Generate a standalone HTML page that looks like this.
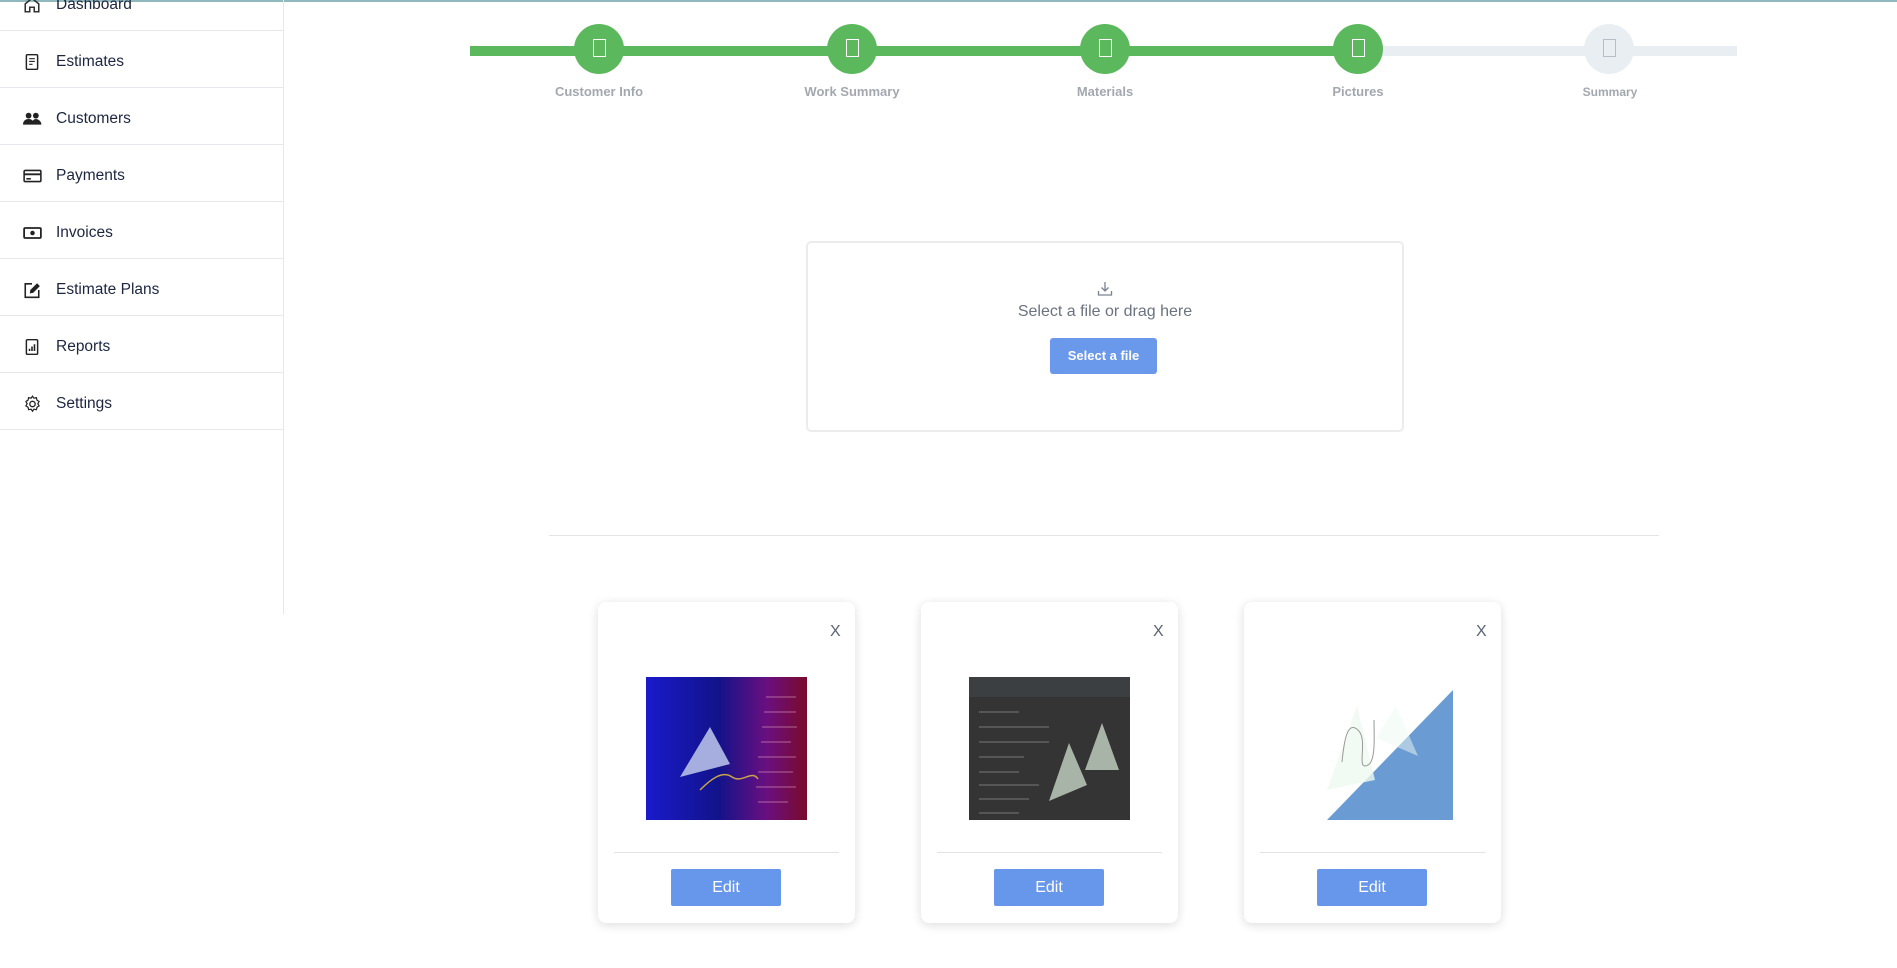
<!DOCTYPE html>
<html><head><meta charset="utf-8"><style>
*{box-sizing:border-box;margin:0;padding:0}
body{width:1897px;height:968px;background:#fff;font-family:"Liberation Sans",sans-serif;position:relative;overflow:hidden}
.topline{position:absolute;left:0;top:0;width:1897px;height:2px;background:#8fb9bc}
.side{position:absolute;left:0;top:0;width:284px;height:614px;border-right:1px solid #e6e8ee}
.row{position:absolute;left:0;width:283px;height:57px;border-bottom:1px solid #e6e8ee}
.row span{position:absolute;left:56px;top:calc(50% + 3px);transform:translateY(-50%);font-size:15.5px;color:#1d2640}
.row svg{position:absolute;left:23px;top:calc(50% + 3px);transform:translateY(-50%)}
.line{position:absolute;top:46px;height:10px}
.circ{position:absolute;top:24px;width:50px;height:50px;border-radius:50%}
.circ i{position:absolute;left:19px;top:15px;width:13px;height:18px;border:1px solid #fff}
.lbl{position:absolute;top:84px;font-size:13px;font-weight:bold;color:#a3a8b0;transform:translateX(-50%);white-space:nowrap}
.up{position:absolute;left:806px;top:241px;width:598px;height:191px;border:2.5px solid #ececec;border-radius:5px}
.up p{position:absolute;top:60px;width:100%;text-align:center;font-size:16px;color:#6b7280}
.btn{position:absolute;left:242px;top:95px;width:107px;height:36px;background:#6a98ea;border-radius:3px;color:#fff;font-weight:bold;font-size:13px;text-align:center;line-height:36px}
.hr{position:absolute;left:549px;top:535px;width:1110px;height:1px;background:#e3e3e3}
.card{position:absolute;top:602px;width:257px;height:321px;border-radius:8px;background:#fff;box-shadow:0 2px 10px rgba(0,0,0,.14)}
.card .x{position:absolute;left:232px;top:21px;font-size:16px;color:#5a6274}
.card .img{position:absolute;left:48px;top:75px;width:161px;height:143px}
.card .div{position:absolute;left:16px;right:16px;top:250px;height:1px;background:#e2e2e2}
.card .edit{position:absolute;left:73px;top:267px;width:110px;height:37px;background:#6797ea;border-radius:2px;color:#fff;font-size:16px;text-align:center;line-height:37px}
</style></head><body>
<div class="topline"></div>
<div class="side">
<div class="row" style="top:-26px"><svg width="18" height="18" viewBox="0 0 16 16"><path d="M2 14V7l6-5 6 5v7h-4v-4H6v4z" fill="none" stroke="#333" stroke-width="1.4"/></svg><span>Dashboard</span></div>
<div class="row" style="top:31px"><svg width="18" height="18" viewBox="0 0 16 16"><rect x="3" y="1.5" width="10" height="13" rx="1" fill="none" stroke="#222" stroke-width="1.3"/><path d="M5.5 5h5M5.5 7.5h5M5.5 10h3" stroke="#222"/></svg><span>Estimates</span></div>
<div class="row" style="top:88px"><svg width="19" height="18" viewBox="0 0 17 16"><circle cx="5" cy="5" r="2.6" fill="#222"/><circle cx="11.5" cy="5" r="2.6" fill="#222"/><path d="M0 13c0-3 2-5 5-5s5 2 5 5zM8 13c0-3 1.5-5 3.5-5s5 2 5 5z" fill="#222"/></svg><span>Customers</span></div>
<div class="row" style="top:145px"><svg width="19" height="18" viewBox="0 0 17 16"><rect x="1" y="3" width="15" height="10" rx="1" fill="none" stroke="#222" stroke-width="1.4"/><path d="M1 6.5h15" stroke="#222" stroke-width="1.6"/><path d="M3 10.5h4" stroke="#222" stroke-width="1.4"/></svg><span>Payments</span></div>
<div class="row" style="top:202px"><svg width="19" height="18" viewBox="0 0 17 16"><rect x="1" y="3.5" width="15" height="9" rx="1" fill="none" stroke="#222" stroke-width="1.6"/><circle cx="8.5" cy="8" r="2" fill="#222"/></svg><span>Invoices</span></div>
<div class="row" style="top:259px"><svg width="18" height="18" viewBox="0 0 16 16"><path d="M8 2.5H2v12h12V8" fill="none" stroke="#222" stroke-width="1.4"/><path d="M6 11l.5-3 6-6 2.5 2.5-6 6z" fill="#222"/></svg><span>Estimate Plans</span></div>
<div class="row" style="top:316px"><svg width="18" height="18" viewBox="0 0 16 16"><rect x="3" y="1.5" width="10" height="13" rx="1" fill="none" stroke="#222" stroke-width="1.3"/><path d="M5.8 11.5v-2M8 11.5v-4M10.2 11.5v-6" stroke="#222" stroke-width="1.4"/></svg><span>Reports</span></div>
<div class="row" style="top:373px"><svg width="19" height="19" viewBox="0 0 17 17"><path d="M8.5 1.5l1.3 1.8 2.2-.5.5 2.2 1.9 1.2-1.1 2 1.1 2-1.9 1.2-.5 2.2-2.2-.5-1.3 1.8-1.3-1.8-2.2.5-.5-2.2-1.9-1.2 1.1-2-1.1-2 1.9-1.2.5-2.2 2.2.5z" fill="none" stroke="#222" stroke-width="1.1"/><circle cx="8.5" cy="8.5" r="2.4" fill="none" stroke="#222" stroke-width="1.2"/></svg><span>Settings</span></div>
</div>

<div class="line" style="left:470px;width:888px;background:#5cb85c"></div>
<div class="line" style="left:1358px;width:379px;background:#e9eef3"></div>
<div class="circ" style="left:574px;background:#5cb85c"><i></i></div>
<div class="circ" style="left:827px;background:#5cb85c"><i></i></div>
<div class="circ" style="left:1080px;background:#5cb85c"><i></i></div>
<div class="circ" style="left:1333px;background:#5cb85c"><i></i></div>
<div class="circ" style="left:1584px;background:#e9eef3"><i style="border-color:#b8bcc4"></i></div>
<div class="lbl" style="left:599px">Customer Info</div>
<div class="lbl" style="left:852px">Work Summary</div>
<div class="lbl" style="left:1105px">Materials</div>
<div class="lbl" style="left:1358px">Pictures</div>
<div class="lbl" style="left:1610px;font-size:12px;top:85px">Summary</div>

<div class="up">
<svg style="position:absolute;left:289px;top:38px" width="16" height="16" viewBox="0 0 16 16"><path d="M8 1v9M4.5 6.5L8 10l3.5-3.5M1.5 10v4h13v-4" fill="none" stroke="#7a8290" stroke-width="1.3"/></svg>
<p>Select a file or drag here</p>
<div class="btn">Select a file</div>
</div>
<div class="hr"></div>

<div class="card" style="left:598px"><div class="x">X</div>
<svg class="img" viewBox="0 0 161 143"><defs><linearGradient id="g1" x1="0" x2="1"><stop offset="0" stop-color="#1a1acc"/><stop offset=".45" stop-color="#12138a"/><stop offset=".75" stop-color="#6a0f80"/><stop offset="1" stop-color="#7a0a2a"/></linearGradient></defs><rect width="161" height="143" fill="url(#g1)"/><path d="M34 100l30-50 20 37z" fill="#a6aee0"/><path d="M54 113c10-10 22-20 32-13s20-8 26 2" fill="none" stroke="#c9a34a" stroke-width="1.5"/><g stroke="#e0a0c0" stroke-width="1" opacity=".6"><path d="M120 20h30M118 35h32M116 50h35M115 65h30M112 80h38M112 95h35M110 110h40M112 125h30"/></g></svg>
<div class="div"></div><div class="edit">Edit</div></div>

<div class="card" style="left:921px"><div class="x">X</div>
<svg class="img" viewBox="0 0 161 143"><rect width="161" height="143" fill="#343434"/><rect width="161" height="20" fill="#3c3f41"/><g stroke="#bbb" stroke-width="1" opacity=".5"><path d="M10 35h40M10 50h70M10 65h70M10 80h45M10 95h40M10 108h60M10 122h50M10 136h40"/></g><path d="M80 124l20-58 18 42z" fill="#a8b4a8"/><path d="M116 93l17-47 17 47z" fill="#a8b4a8"/></svg>
<div class="div"></div><div class="edit">Edit</div></div>

<div class="card" style="left:1244px"><div class="x">X</div>
<svg class="img" style="left:60px;top:88px;width:150px;height:130px" viewBox="0 0 150 130"><path d="M149 0v130H23z" fill="#6a9bd3"/><path d="M23 100l30-84 18 74z" fill="#eefaf0" opacity=".8"/><path d="M72 48l20-32 22 50z" fill="#eefaf0" opacity=".5"/><path d="M38 72c2-20 5-42 16-32s-3 42 10 35c8-4 6-30 6-45" fill="none" stroke="#999" stroke-width="1"/></svg>
<div class="div"></div><div class="edit">Edit</div></div>
</body></html>
